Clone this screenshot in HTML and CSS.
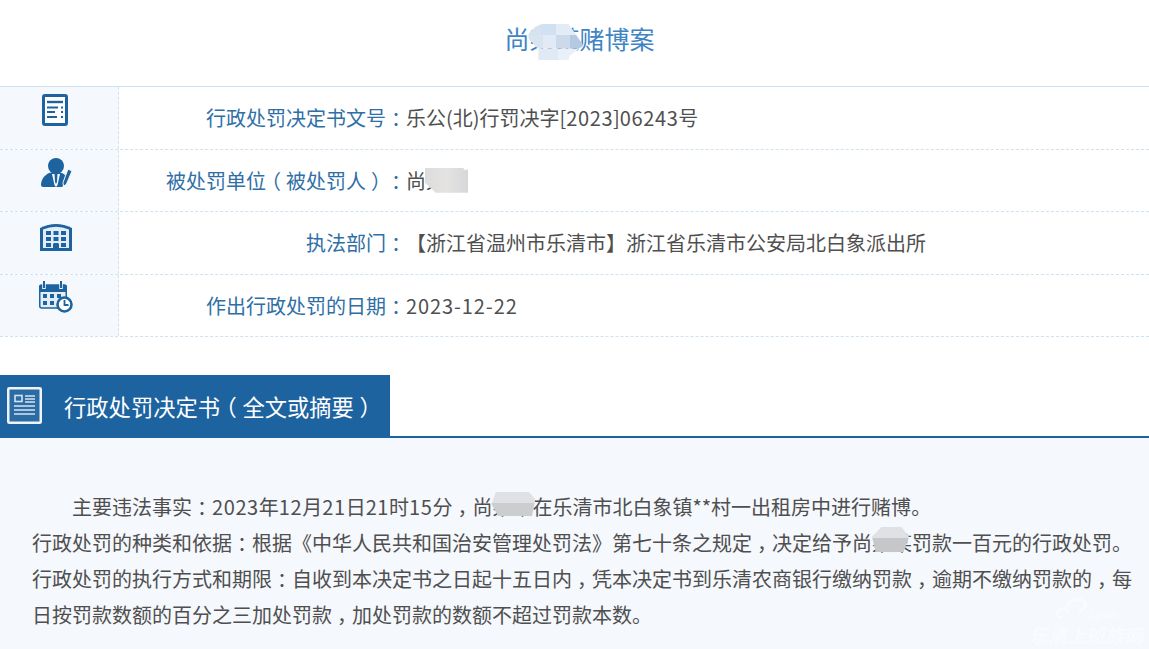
FILE: index.html
```html
<!DOCTYPE html>
<html lang="zh-CN">
<head>
<meta charset="utf-8">
<title>行政处罚决定书</title>
<link rel="stylesheet" href="styles.css">
</head>
<body>
<h1 class="title"><span class="masked">尚某某<i class="mask mask-title"></i></span>赌博案</h1>
<div class="info">
  <div class="row">
    <div class="ico">
      <svg class="i1" width="26" height="32" viewBox="0 0 26 32"><rect x="1.500" y="1.500" width="23" height="29" rx="1.500" fill="#fff" stroke="#1d639f" stroke-width="3"/><path d="M5 8h16" stroke="#1d639f" stroke-width="2.400"/><path d="M5 13.500h11M5 18h8M5 23h10M19 13.500h2M19 18h2M19 23h2" stroke="#1d639f" stroke-width="1.800"/></svg>
    </div>
    <div class="label">行政处罚决定书文号<span class="p">：</span></div>
    <div class="value">乐公(北)行罚决字[<span class="num">2023</span>]<span class="num">06243</span>号</div>
  </div>
  <div class="row">
    <div class="ico">
      <svg class="i2" width="32" height="30" viewBox="0 0 32 30"><circle cx="15" cy="8" r="8" fill="#1d639f"/><path d="M0 27c0-6 4-10 8-12 3-1 10-1 13 0 2 1 3 2 4 3l-3 10-1 1H2c-1 0-2-1-2-2z" fill="#1d639f"/><path d="M11 16h8l-2.500 11-1.500 2-1.500-2z" fill="#fff"/><path d="M13.500 16h3l-.5 8-1 2-1-2z" fill="#1d639f"/><path d="M27 11l4 2-5.500 13-3 2.500-.5-4z" fill="#1d639f" stroke="#f5f9fe"/></svg>
    </div>
    <div class="label">被处罚单位<span class="p">（</span>被处罚人<span class="p">）</span><span class="p">：</span></div>
    <div class="value"><span class="masked">尚某某<i class="mask mask-row"></i></span></div>
  </div>
  <div class="row">
    <div class="ico">
      <svg class="i3" width="32" height="28" viewBox="0 0 32 28"><path d="M0 5Q16-3 32 5v23H0z" fill="#1d639f"/><path d="M3 6.500Q16 1 29 6.500V25H19v-4h-6v4H3z" fill="#e3edf6"/><g fill="#1d639f"><rect x="6" y="8" width="5" height="4"/><rect x="13.500" y="8" width="5" height="4"/><rect x="21" y="8" width="5" height="4"/><rect x="6" y="14" width="5" height="4"/><rect x="13.500" y="14" width="5" height="4"/><rect x="21" y="14" width="5" height="4"/><rect x="6" y="20" width="5" height="4"/><rect x="13.500" y="20" width="5" height="8"/><rect x="21" y="20" width="5" height="4"/></g></svg>
    </div>
    <div class="label">执法部门<span class="p">：</span></div>
    <div class="value">【浙江省温州市乐清市】浙江省乐清市公安局北白象派出所</div>
  </div>
  <div class="row">
    <div class="ico">
      <svg class="i4" width="34" height="32" viewBox="0 0 34 32"><rect x=".750" y="4" width="26.500" height="23" rx="2" fill="#e3edf6" stroke="#1d639f" stroke-width="1.500"/><path d="M0 6a2 2 0 0 1 2-2h24a2 2 0 0 1 2 2v5H0z" fill="#1d639f"/><path d="M5 0v8M22 0v8" stroke="#f5f9fe" stroke-width="3.500"/><path d="M5 0v7M22 0v7" stroke="#1d639f" stroke-width="2"/><g fill="#1d639f"><rect x="4" y="13" width="4" height="4"/><rect x="11" y="13" width="4" height="4"/><rect x="18" y="13" width="4" height="4"/><rect x="4" y="20" width="4" height="4"/><rect x="11" y="20" width="4" height="4"/></g><circle cx="25.500" cy="23.500" r="7" fill="#fff" stroke="#1d639f" stroke-width="2.600"/><path d="M25.500 19v5h4" fill="none" stroke="#1d639f" stroke-width="1.800"/></svg>
    </div>
    <div class="label">作出行政处罚的日期<span class="p">：</span></div>
    <div class="value"><span class="num-date">2023-12-22</span></div>
  </div>
</div>

<div class="section-head">
  <h2 class="section-tab">
    <svg class="tab-ico" width="35" height="37" viewBox="0 0 35 37"><rect x="1.250" y="1.250" width="32.500" height="34.500" rx="1" fill="#2c6ca4" stroke="#eef3f9" stroke-width="2.500"/><rect x="8" y="8.500" width="7" height="6" fill="none" stroke="#d5e3ef" stroke-width="1.600"/><path d="M18 9h10M18 12h10M18 15h10M7 19h21M7 23h21M7 27h21" stroke="#d5e3ef" stroke-width="1.700"/></svg>
    <span class="tab-text">行政处罚决定书<span class="p">（</span>全文或摘要<span class="p">）</span></span>
  </h2>
</div>

<div class="content">
  <p class="para">
    <span class="indent"></span>主要违法事实<span class="p">：</span><span class="num">2023</span>年<span class="num">12</span>月<span class="num">21</span>日<span class="num">21</span>时<span class="num">15</span>分<span class="p">，</span><span class="masked">尚某某<i class="mask mask-a"></i></span>在乐清市北白象镇**村一出租房中进行赌博<span class="p p-end">。</span><br>
    行政处罚的种类和依据<span class="p">：</span>根据《中华人民共和国治安管理处罚法》第七十条之规定<span class="p">，</span>决定给予<span class="masked">尚某某<i class="mask mask-b"></i></span>罚款一百元的行政处罚<span class="p p-end">。</span><br>
    行政处罚的执行方式和期限<span class="p">：</span>自收到本决定书之日起十五日内<span class="p">，</span>凭本决定书到乐清农商银行缴纳罚款<span class="p">，</span>逾期不缴纳罚款的<span class="p">，</span>每<br>
    日按罚款数额的百分之三加处罚款<span class="p">，</span>加处罚款的数额不超过罚款本数<span class="p p-end">。</span>
  </p>
  <div class="watermark">
    <div class="wm-logo">
      <svg width="36" height="28" viewBox="0 0 40 28"><path d="M8 24c-7-1-8-7-2-10 6-2 9 1 8 5M14 11c1-7 12-10 18-6 4 4 1 10-6 12" fill="none" stroke="#fff" stroke-width="3.500"/></svg>
      <span class="wm-brand">Sgou</span>
    </div>
    <span class="wm-text">乐清上班族网</span>
  </div>
</div>
</body>
</html>
```
FILE: styles.css
```css
* { box-sizing: border-box; }
html, body { margin: 0; padding: 0; }
body {
  width: 1149px;
  height: 649px;
  overflow: hidden;
  background: #fff;
  font-family: "Noto Sans CJK SC", "Noto Sans", sans-serif;
  font-size: 20px;
  color: #4f4f4f;
  text-spacing-trim: space-all;
  font-kerning: none;
}
.p {
  display: inline-block;
  width: 1em;
  text-align: center;
  font-feature-settings: "halt";
}
.p-end { text-align: left; }
.num { letter-spacing: .6px; }
.num-date { letter-spacing: .9px; }
.title {
  margin: 0;
  height: 86px;
  padding: 20px 0 0 10px;
  text-align: center;
  font-size: 25px;
  line-height: 37px;
  font-weight: 400;
  color: #3f84c4;
}
.masked { position: relative; display: inline-block; }
.mask { position: absolute; display: block; }
.mask-title {
  left: 24px; top: 4px; width: 55px; height: 36px;
  background:
    linear-gradient(90deg, #d6e2f0 0 24%, #d2e1f1 24% 50%, #e3ecf6 50% 100%) 0 0 / 100% 31% no-repeat,
    linear-gradient(90deg, #d9e4f1 0 27%, #e2eaf5 27% 50%, #ccd9ea 50% 76%, #b4c9e2 76% 100%) 0 50% / 100% 38% no-repeat,
    linear-gradient(90deg, #dfeaf5 0 55%, #eaf0f8 55% 100%) 0 100% / 100% 31% no-repeat;
  clip-path: polygon(24% 0, 73% 0, 100% 60%, 75% 88%, 73% 100%, 18% 100%, 18% 70%, 0 40%, 0 28%, 12% 8%);
}
.mask-row {
  left: 19px; top: 2px; width: 43px; height: 25px;
  background: linear-gradient(90deg, #dcdcde, #e4e3e1 50%, #d6d7d9);
  clip-path: polygon(0 0, 90% 0, 90% 8%, 100% 8%, 100% 100%, 25% 100%, 0 60%);
}
.mask-a {
  left: 19px; top: 3px; width: 44px; height: 24px;
  background: linear-gradient(#dfe1e4 0 45%, #cccdcf 45% 100%);
  clip-path: polygon(10% 0, 85% 0, 100% 30%, 92% 100%, 15% 100%, 0 50%);
}
.mask-b {
  left: 20px; top: 2px; width: 37px; height: 25px;
  background: linear-gradient(#dfe1e5 0 45%, #c6c7c9 45% 100%);
  clip-path: polygon(25% 0, 80% 0, 100% 40%, 85% 100%, 10% 100%, 0 40%);
}
.info { border-top: 1px solid #cfe2f1; }
.row {
  display: grid;
  grid-template-columns: 119px 287px 1fr;
  height: 62.500px;
  border-bottom: 1px dashed #cfe2f1;
  align-items: center;
  line-height: 30px;
}
.ico {
  align-self: stretch;
  display: flex;
  justify-content: center;
  padding-right: 6px;
  background: #f5f9fe;
  border-right: 1px dashed #cfe2f1;
}
.ico svg { display: block; }
.i1 { margin: 7px 2px 0 0; }
.i2 { margin: 8px 0 0 2px; }
.i3 { margin-top: 11px; }
.i4 { margin-top: 6px; }
.label { text-align: right; color: #2f6fa6; padding-top: 1px; white-space: nowrap; }
.value { padding-top: 1px; white-space: nowrap; }
.section-head {
  margin-top: 38px;
  height: 63px;
  border-bottom: 2px solid #1d639f;
}
.section-tab {
  margin: 0;
  width: 390px;
  height: 63px;
  display: flex;
  align-items: center;
  background: #1d639f;
  color: #fff;
  font-size: 22.300px;
  font-weight: 400;
  white-space: nowrap;
}
.tab-ico { margin: 0 22px 3px 7px; flex: none; }
.tab-text { margin-bottom: 2px; }
.content {
  position: relative;
  height: 212px;
  overflow: hidden;
  background: #f5f8fd;
  padding: 51px 0 0 32px;
}
.para { margin: 0; line-height: 36px; white-space: nowrap; }
.indent { display: inline-block; width: 40px; }
.watermark {
  position: absolute;
  left: 1029px;
  top: 157px;
  width: 120px;
  display: flex;
  flex-direction: column;
  opacity: .55;
}
.wm-logo { display: flex; align-items: flex-end; margin-left: 26px; }
.wm-logo svg { display: block; flex: none; }
.wm-brand {
  margin: 0 0 3px -4px;
  font-size: 12px;
  line-height: 14px;
  font-style: italic;
  font-weight: 700;
  color: #fff;
}
.wm-text {
  margin-top: 1px;
  font-size: 19px;
  line-height: 22px;
  font-style: italic;
  font-weight: 700;
  color: #fff;
  white-space: nowrap;
}
```
